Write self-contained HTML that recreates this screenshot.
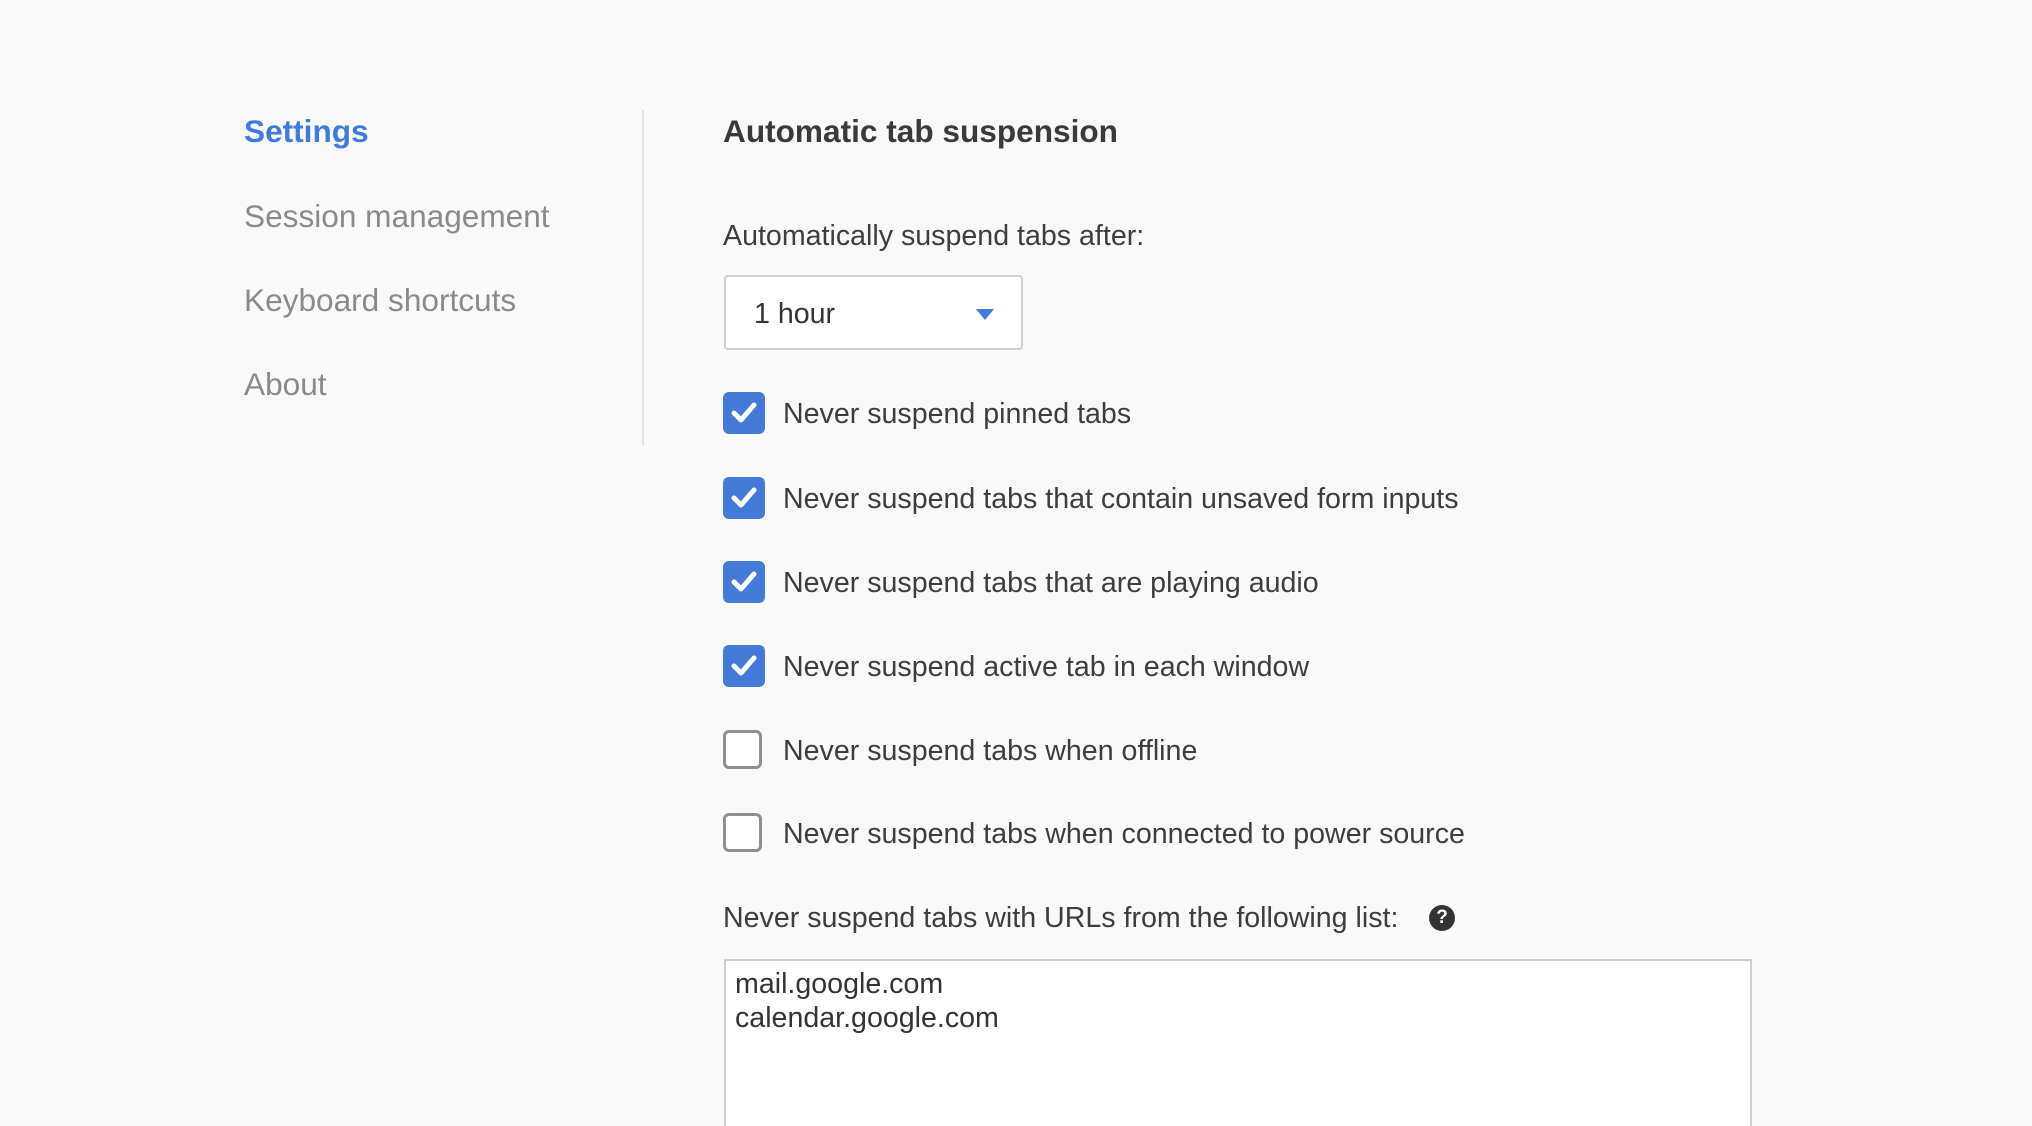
<!DOCTYPE html>
<html><head><meta charset="utf-8"><style>
html,body{margin:0;padding:0;background:#f9f9f9;width:2032px;height:1126px;overflow:hidden;font-family:"Liberation Sans",sans-serif;color:#3a3a3a;position:relative}
.a{position:absolute;white-space:nowrap;line-height:1}
.nav{left:244px;font-size:31.6px;color:#8a8a8a}
.cb{position:absolute;left:723px;width:42px;height:42px;border-radius:6px;box-sizing:border-box}
.on{background:#4479d8}
.off{border:3px solid #8f8f8f;background:#fff;width:39px;height:39px}
.lbl{left:783px;font-size:28.6px;color:#3d3d3d}
</style></head><body>
<div class="a" style="left:244px;top:116px;font-size:31.6px;font-weight:bold;color:#3f7bdc">Settings</div>
<div class="a nav" style="top:201px">Session management</div>
<div class="a nav" style="top:285px">Keyboard shortcuts</div>
<div class="a nav" style="top:369px">About</div>
<div style="position:absolute;left:642px;top:110px;width:2px;height:335px;background:#e2e2e2"></div>

<div class="a" style="left:723px;top:116px;font-size:31.6px;font-weight:bold;color:#3a3a3a">Automatic tab suspension</div>
<div class="a" style="left:723px;top:222px;font-size:28.6px;color:#3d3d3d">Automatically suspend tabs after:</div>
<div style="position:absolute;left:724px;top:275px;width:299px;height:75px;box-sizing:border-box;border:2px solid #cfcfcf;border-radius:4px;background:#fff"></div>
<div class="a" style="left:754px;top:300px;font-size:28.6px;color:#333">1 hour</div>
<div style="position:absolute;left:976px;top:309px;width:0;height:0;border-left:9px solid transparent;border-right:9px solid transparent;border-top:11px solid #4479d8"></div>

<div class="cb on" style="top:392px"><svg width="42" height="42"><path d="M11 21 L18 28 L31 13" stroke="#fff" stroke-width="5" fill="none" stroke-linecap="round" stroke-linejoin="round"/></svg></div>
<div class="a lbl" style="top:400px">Never suspend pinned tabs</div>
<div class="cb on" style="top:477px"><svg width="42" height="42"><path d="M11 21 L18 28 L31 13" stroke="#fff" stroke-width="5" fill="none" stroke-linecap="round" stroke-linejoin="round"/></svg></div>
<div class="a lbl" style="top:485px">Never suspend tabs that contain unsaved form inputs</div>
<div class="cb on" style="top:561px"><svg width="42" height="42"><path d="M11 21 L18 28 L31 13" stroke="#fff" stroke-width="5" fill="none" stroke-linecap="round" stroke-linejoin="round"/></svg></div>
<div class="a lbl" style="top:569px">Never suspend tabs that are playing audio</div>
<div class="cb on" style="top:645px"><svg width="42" height="42"><path d="M11 21 L18 28 L31 13" stroke="#fff" stroke-width="5" fill="none" stroke-linecap="round" stroke-linejoin="round"/></svg></div>
<div class="a lbl" style="top:653px">Never suspend active tab in each window</div>
<div class="cb off" style="top:730px"></div>
<div class="a lbl" style="top:737px">Never suspend tabs when offline</div>
<div class="cb off" style="top:813px"></div>
<div class="a lbl" style="top:820px">Never suspend tabs when connected to power source</div>

<div class="a" style="left:723px;top:904px;font-size:28.6px;color:#3d3d3d">Never suspend tabs with URLs from the following list:</div>
<div style="position:absolute;left:1429px;top:905px;width:26px;height:26px;border-radius:50%;background:#333;color:#fff;font-size:19px;font-weight:bold;text-align:center;line-height:26px">?</div>
<div style="position:absolute;left:724px;top:959px;width:1028px;height:167px;box-sizing:border-box;border:2px solid #cfcfcf;border-bottom:none;background:#fff"></div>
<div class="a" style="left:735px;top:967px;font-size:28.6px;color:#333;line-height:34px">mail.google.com<br>calendar.google.com</div>
</body></html>
